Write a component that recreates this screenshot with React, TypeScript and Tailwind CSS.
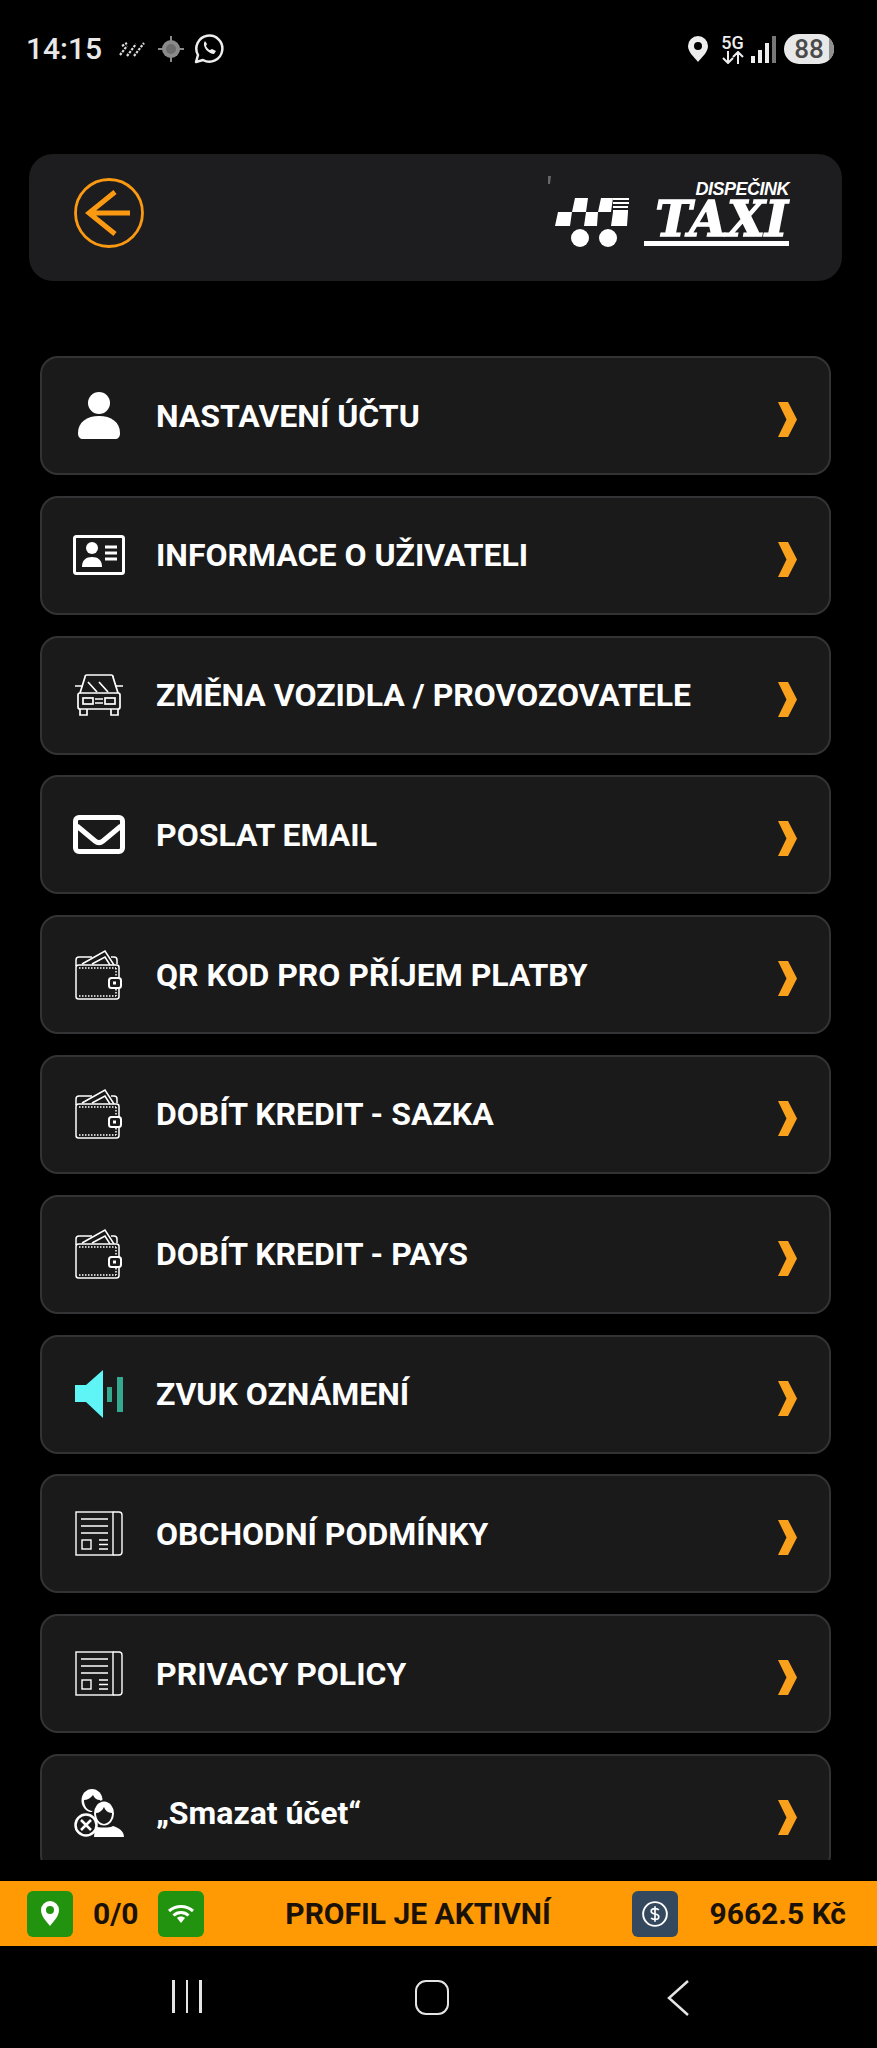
import type { ReactNode } from 'react';

const white = '#ffffff';
const rowBg = '#1a1a1b';

function UserIcon() {
  return (
    <svg width="42" height="47" viewBox="0 0 42 47" fill={white}>
      <circle cx="21" cy="11" r="11" />
      <path d="M0 41c0-11 9-17 21-17s21 6 21 17c0 4-2 6-5 6H5c-3 0-5-2-5-6z" />
    </svg>
  );
}

function IdCardIcon() {
  return (
    <svg width="52" height="40" viewBox="0 0 52 40" fill="none" stroke={white}>
      <rect x="1.500" y="1.500" width="49" height="37" rx="2" strokeWidth="3" />
      <circle cx="19" cy="13" r="6" fill={white} stroke="none" />
      <path d="M9 32c0-7 4-10 10-10s10 3 10 10z" fill={white} stroke="none" />
      <path d="M32 12h12M32 18h12M32 24h12" strokeWidth="2.800" />
    </svg>
  );
}

function CarIcon() {
  return (
    <svg width="48" height="42" viewBox="0 0 48 42" fill="none" stroke={white} strokeWidth="1.700">
      <path d="M5 19 10 3c0-1 1-2 2-2h24c1 0 2 1 2 2l5 16" />
      <path d="M0 12h8M40 12h8" />
      <rect x="3" y="19" width="42" height="16" rx="2" />
      <path d="M5 35v6h7v-6M36 35v6h7v-6" />
      <rect x="8" y="24" width="10" height="6" />
      <rect x="30" y="24" width="10" height="6" />
      <path d="M20 25h8M20 29h8M13 8l9 10M24 8l9 10" />
    </svg>
  );
}

function MailIcon() {
  return (
    <svg width="52" height="39" viewBox="0 0 52 39" fill="none" stroke={white} strokeWidth="5">
      <rect x="2.500" y="2.500" width="47" height="34" rx="3.500" />
      <path d="M4 11l18 15c2.500 2 5.500 2 8 0l18-15" strokeLinejoin="round" />
    </svg>
  );
}

function WalletIcon() {
  return (
    <svg width="48" height="50" viewBox="0 0 48 50" fill="none" stroke={white} strokeWidth="1.500">
      <path d="M1 16V10c0-2 1-3 3-3h13" />
      <path d="M7 14 30 1l9 14M17 14 30 7l5 8" />
      <path d="M36 7h3c2 0 3 1 3 3v4" />
      <rect x="1" y="15" width="43" height="34" rx="2.500" />
      <path d="M4 18h37M41 18v9M41 39v7M4 46h37" strokeDasharray="1.500 1.500" />
      <rect x="34" y="28" width="12" height="10" rx="2.500" fill={rowBg} strokeWidth="2" />
      <rect x="38" y="31.500" width="3" height="3" fill={white} stroke="none" />
    </svg>
  );
}

function SoundIcon() {
  return (
    <svg width="48" height="48" viewBox="0 0 48 48">
      <path d="M0 15h11L28 0v48L11 32H0z" fill="#5ff5f7" />
      <rect x="32" y="17" width="5" height="15" fill="#35a890" />
      <rect x="42" y="7" width="6" height="35" fill="#35a890" />
    </svg>
  );
}

function PaperIcon() {
  return (
    <svg width="48" height="46" viewBox="0 0 48 46" fill="none" stroke={white} strokeWidth="1.400">
      <rect x="1" y="1" width="37" height="43" />
      <path d="M38 1h6c2 0 3 1 3 3v37c0 2-1 3-3 3h-6" />
      <path d="M6 8h27M6 15h27M6 22h27" />
      <rect x="7" y="29" width="9" height="9" />
      <path d="M24 29h9M24 33.500h9M24 38h9" />
    </svg>
  );
}

function DeleteUserIcon() {
  return (
    <svg width="50" height="48" viewBox="0 0 50 48">
      <ellipse cx="18" cy="11.500" rx="10.500" ry="11.500" fill={white} />
      <path d="M10 11c3 0 7-2 9-5 1 3 4 5 7 5 0 6-3 10-8 11-5-1-8-5-8-11z" fill={rowBg} />
      <ellipse cx="30" cy="25" rx="12" ry="14" fill={rowBg} />
      <ellipse cx="30" cy="24.500" rx="10" ry="12" fill={white} />
      <path d="M22 24c3 0 6-2 8-6 1 3 4 6 8 6 0 6-3 10-8 11-5-1-8-5-8-11z" fill={rowBg} />
      <path d="M21 37c3 2 15 2 18 0 6 2 11 5 11 11H20z" fill={white} />
      <circle cx="12" cy="36" r="10.500" fill={rowBg} stroke={white} strokeWidth="2.500" />
      <path d="M7 31l10 10M17 31 7 41" stroke={white} strokeWidth="2.500" />
    </svg>
  );
}

function Chevron() {
  return (
    <svg className="mt-[8px]" width="19" height="35" viewBox="0 0 19 35" fill="#f9a01c">
      <path d="M0 0h10l9 17.500L10 35H0l8.500-17.500z" />
    </svg>
  );
}

const rows: { label: string; icon: ReactNode }[] = [
  { label: 'NASTAVENÍ ÚČTU', icon: <UserIcon /> },
  { label: 'INFORMACE O UŽIVATELI', icon: <IdCardIcon /> },
  { label: 'ZMĚNA VOZIDLA / PROVOZOVATELE', icon: <CarIcon /> },
  { label: 'POSLAT EMAIL', icon: <MailIcon /> },
  { label: 'QR KOD PRO PŘÍJEM PLATBY', icon: <WalletIcon /> },
  { label: 'DOBÍT KREDIT - SAZKA', icon: <WalletIcon /> },
  { label: 'DOBÍT KREDIT - PAYS', icon: <WalletIcon /> },
  { label: 'ZVUK OZNÁMENÍ', icon: <SoundIcon /> },
  { label: 'OBCHODNÍ PODMÍNKY', icon: <PaperIcon /> },
  { label: 'PRIVACY POLICY', icon: <PaperIcon /> },
  { label: '„Smazat účet“', icon: <DeleteUserIcon /> },
];

function StatusBar() {
  return (
    <div className="h-[154px] shrink-0">
      <div className="flex items-center justify-between pl-[26px] pr-[43px] pt-[31px]">
        <div className="flex items-center">
          <span className="text-[30px] leading-[36px] font-medium text-[#e8e8e8]">14:15</span>
          <svg className="ml-[17px]" width="26" height="16" viewBox="0 0 26 16" stroke="#dddddd" strokeWidth="2.200" strokeDasharray="2.500 1.200">
            <path d="M1 14 8 5M8 15l9-12M15 15l10-13M3 5l5-3" />
          </svg>
          <svg className="ml-[13px]" width="26" height="26" viewBox="0 0 26 26" fill="#8a8a8a">
            <circle cx="13" cy="13" r="9" />
            <rect x="12" y="0" width="2" height="26" />
            <rect x="0" y="12" width="26" height="2" />
            <circle cx="13" cy="13" r="5" fill="#6d6d6d" />
          </svg>
          <svg className="ml-[10px]" width="30" height="30" viewBox="0 0 30 30" fill="none" stroke="#eeeeee" strokeWidth="2.500">
            <path d="M2 28l2-7a13 13 0 1 1 5 5z" strokeLinejoin="round" />
            <path d="M10 9c-1 5 5 11 10 11l2-3-4-2-2 1c-1 0-3-2-4-4l1-2-2-3z" fill="#eeeeee" stroke="none" />
          </svg>
        </div>
        <div className="flex items-center">
          <svg width="20" height="26" viewBox="0 0 20 26" fill="#eeeeee">
            <path fillRule="evenodd" d="M10 0a10 10 0 0 1 10 10c0 6-6 11-10 16C6 21 0 16 0 10A10 10 0 0 1 10 0zm0 6a4 4 0 1 0 0 8 4 4 0 0 0 0-8z" />
          </svg>
          <div className="ml-[12px] flex w-[25px] flex-col items-center">
            <span className="text-[18px] leading-[16px] font-medium text-[#eeeeee]">5G</span>
            <svg width="22" height="13" viewBox="0 0 22 13" fill="none" stroke="#eeeeee" strokeWidth="2">
              <path d="M6 0v11M1 7l5 5 5-5M16 13V2M11 6l5-5 5 5" />
            </svg>
          </div>
          <div className="ml-[6px] flex h-[27px] items-end gap-[3px]">
            <span className="h-[7px] w-[4px] bg-[#eeeeee]" />
            <span className="h-[13px] w-[4px] bg-[#eeeeee]" />
            <span className="h-[20px] w-[4px] bg-[#eeeeee]" />
            <span className="h-[27px] w-[4px] bg-[#777777]" />
          </div>
          <div className="relative ml-[8px] flex h-[30px] w-[50px] items-center justify-center overflow-hidden rounded-[15px] bg-[#e8e8e8]">
            <span className="absolute inset-y-0 right-0 w-[5px] bg-[#8f8f8f]" />
            <span className="text-[26px] leading-none font-medium text-[#4a4a4a]">88</span>
          </div>
        </div>
      </div>
    </div>
  );
}

function Logo() {
  return (
    <div className="mb-[12px] flex items-end">
      <svg width="82" height="71" viewBox="0 0 82 71" fill={white}>
        <path d="M1 0h3l-1 8H1z" fill="#666666" />
        <path d="M28 22h13l-2 14H25zM54 22h12l-2 14H51zM11 36h14l-2 14H8zM39 36h12l-1 14H37zM66 36h15l-1 14H64z" />
        <path d="M66 22h16v2H66zM66 26h16v2H66zM66 30h15v2H66zM66 34h15v2H66z" />
        <circle cx="33" cy="62" r="9" />
        <circle cx="61" cy="62" r="9" />
      </svg>
      <div className="mb-[1px] ml-[15px] flex w-[145px] flex-col items-end">
        <span className="h-[18px] font-['Liberation_Sans',sans-serif] text-[18px] leading-[18px] font-bold italic tracking-[-0.5px] text-white">DISPEČINK</span>
        <span className="mt-[2px] h-[38px] w-full pr-[1px] text-right font-['DejaVu_Serif',serif] text-[49px] leading-[38px] font-bold italic text-white [-webkit-text-stroke:1.5px_#ffffff]">TAXI</span>
        <div className="mt-[3px] h-[5px] w-full bg-white" />
      </div>
    </div>
  );
}

function Header() {
  return (
    <div className="ml-[29px] mr-[35px] flex h-[127px] shrink-0 items-center justify-between rounded-[24px] bg-[#1d1d1f] pl-[45px] pr-[53px]">
      <svg className="mb-[9px]" width="70" height="70" viewBox="0 0 70 70" fill="none" stroke="#fb9a12">
        <circle cx="35" cy="35" r="33.500" strokeWidth="2.800" />
        <path d="M56 35H17M41 14 15 35l26 21" strokeWidth="5" />
      </svg>
      <Logo />
    </div>
  );
}

function BottomBar() {
  return (
    <div className="flex h-[65px] shrink-0 items-center bg-[#ff9a05] pl-[27px] pr-[31px] text-[30px] font-bold text-[#1a1208]">
      <div className="flex h-[46px] w-[46px] items-center justify-center rounded-[6px] bg-[#22930e]">
        <svg width="18" height="25" viewBox="0 0 18 25" fill={white}>
          <path fillRule="evenodd" d="M9 0a9 9 0 0 1 9 9c0 6-5 11-9 16C5 20 0 15 0 9a9 9 0 0 1 9-9zm0 5a4 4 0 1 0 0 8 4 4 0 0 0 0-8z" />
        </svg>
      </div>
      <span className="ml-[20px]">0/0</span>
      <div className="ml-[19px] flex h-[46px] w-[46px] items-center justify-center rounded-[6px] bg-[#22930e]">
        <svg width="26" height="18" viewBox="0 0 26 18" fill="none" stroke={white} strokeWidth="3">
          <path d="M1 6c7-6 17-6 24 0M5.500 10.500c4-4 11-4 15 0" />
          <path d="M9 13c2-2 6-2 8 0l-4 5z" fill={white} stroke="none" />
        </svg>
      </div>
      <span className="flex-1 text-center">PROFIL JE AKTIVNÍ</span>
      <div className="flex h-[46px] w-[46px] items-center justify-center rounded-[6px] bg-[#34495e]">
        <svg width="26" height="26" viewBox="0 0 34 34" fill="none" stroke={white}>
          <circle cx="17" cy="17" r="15.500" strokeWidth="2.500" />
          <path d="M22 12c-1-2-3-2-5-2s-5 1-5 3.500 2 3 5 3.500 5 1 5 3.500-3 3.500-5 3.500-4 0-5-2M17 7v20" strokeWidth="2.200" />
        </svg>
      </div>
      <span className="ml-[31px]">9662.5 Kč</span>
    </div>
  );
}

function NavBar() {
  return (
    <div className="h-[102px] shrink-0 pt-[34px]">
      <div className="relative h-[36px] w-full">
        <div className="absolute left-[172px] top-0 flex h-[33px] gap-[11px]">
          <span className="w-[2.500px] bg-[#e4e4e4]" />
          <span className="w-[2.500px] bg-[#e4e4e4]" />
          <span className="w-[2.500px] bg-[#e4e4e4]" />
        </div>
        <div className="absolute left-[415px] top-0 h-[35px] w-[34px] rounded-[11px] border-[2.500px] border-[#e4e4e4]" />
        <svg className="absolute left-[666px] top-0" width="24" height="36" viewBox="0 0 24 36" fill="none" stroke="#e4e4e4" strokeWidth="2.500">
          <path d="M22 1 3 18l19 17" />
        </svg>
      </div>
    </div>
  );
}

export default function App() {
  return (
    <div className="flex h-[2048px] w-[877px] flex-col overflow-hidden bg-black font-['Roboto',sans-serif]">
      <StatusBar />
      <Header />
      <div className="ml-[40px] mr-[46px] mt-[75px] flex h-[1504px] flex-col gap-[20.8px] overflow-hidden">
        {rows.map((row) => (
          <div key={row.label} className="flex h-[119px] shrink-0 items-center rounded-[18px] border-2 border-[#333335] bg-[#1a1a1b] pl-[29px] pr-[32px]">
            <div className="flex w-[56px] shrink-0 items-center justify-center">{row.icon}</div>
            <span className="ml-[29px] flex-1 text-[32px] leading-none font-bold text-white">{row.label}</span>
            <Chevron />
          </div>
        ))}
      </div>
      <div className="h-[21px] shrink-0" />
      <BottomBar />
      <NavBar />
    </div>
  );
}
